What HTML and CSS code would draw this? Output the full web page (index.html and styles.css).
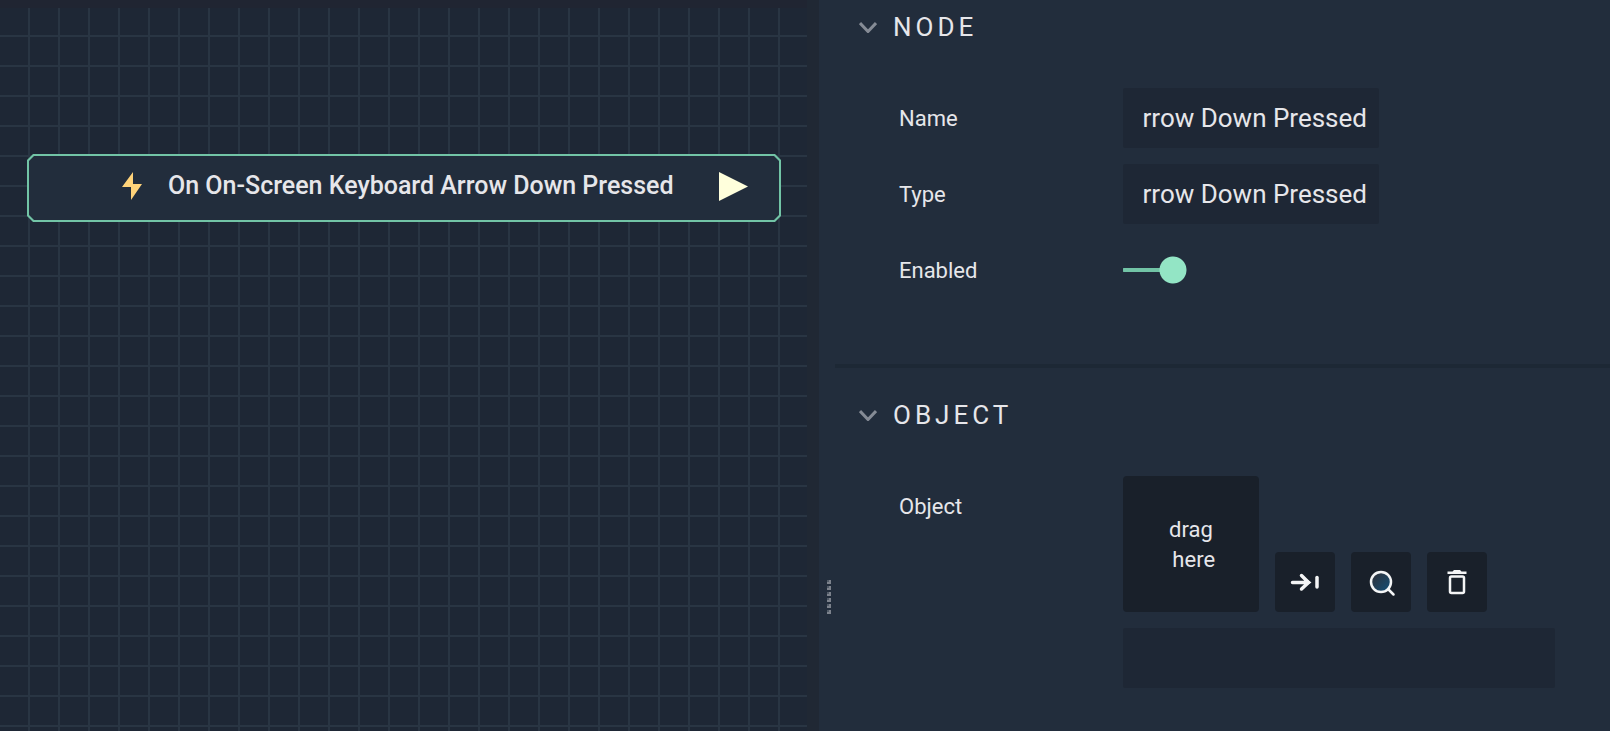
FILE: index.html
```html
<!DOCTYPE html>
<html lang="en">
<head>
<meta charset="utf-8">
<title>Node editor</title>
<link rel="stylesheet" href="styles.css">
</head>
<body>
<div class="editor">
  <main class="canvas">
    <div class="grid">
      <div class="node">
        <svg class="node-bolt" viewBox="0 0 20 28" aria-hidden="true"><path d="M11 0 0 15h9v13L20 12h-9z"/></svg>
        <span class="node-title">On On-Screen Keyboard Arrow Down Pressed</span>
        <svg class="node-port" viewBox="0 0 29 29" aria-hidden="true"><path d="M0 0 29 14.500 0 29z"/></svg>
      </div>
    </div>
  </main>
  <div class="gutter"></div>
  <aside class="panel">
    <div class="grip"><i></i><i></i><i></i><i></i><i></i><i></i></div>
    <section class="section">
      <h2 class="heading">
        <svg class="chevron" viewBox="0 0 18 12" aria-hidden="true"><path d="M1 2 9 10.500 17 2"/></svg>
        NODE
      </h2>
      <div class="fields">
        <label class="label" for="name">Name</label>
        <input class="text" id="name" type="text" dir="rtl" value="On On-Screen Keyboard Arrow Down Pressed">
        <label class="label" for="type">Type</label>
        <input class="text" id="type" type="text" dir="rtl" value="On On-Screen Keyboard Arrow Down Pressed" readonly>
        <label class="label" for="enabled">Enabled</label>
        <div class="cell"><input class="toggle" id="enabled" type="checkbox" checked></div>
      </div>
    </section>
    <section class="section section-object">
      <h2 class="heading">
        <svg class="chevron" viewBox="0 0 18 12" aria-hidden="true"><path d="M1 2 9 10.500 17 2"/></svg>
        OBJECT
      </h2>
      <div class="fields">
        <label class="label" for="object">Object</label>
        <div class="object">
          <div class="tools">
            <div class="drop">drag<br>&nbsp;here</div>
            <button class="tool" type="button" aria-label="Go to object">
              <svg viewBox="0 0 30 30" aria-hidden="true"><path class="stroke thick" d="M2.500 15.500h16M11.500 8.500l7 7-7 6.500"/><path class="fill" d="M14 10.500l7.500 5-7.500 4.500z"/><path class="stroke thick" d="M27 10.500v9.500"/></svg>
            </button>
            <button class="tool" type="button" aria-label="Find object">
              <svg viewBox="0 0 30 30" aria-hidden="true"><defs><linearGradient id="lens" x1="0" y1="0" x2="1" y2="1"><stop offset="0.200" stop-color="#2b3542"/><stop offset="1" stop-color="#12507a"/></linearGradient></defs><circle class="stroke" cx="15" cy="15" r="10" fill="url(#lens)"/><path class="stroke" d="m22 22 5.500 5.500"/></svg>
            </button>
            <button class="tool" type="button" aria-label="Delete">
              <svg viewBox="0 0 30 30" aria-hidden="true"><path class="fill" d="M5.500 4.500h5L12 3h6l1.500 1.500h5V7h-19z"/><rect class="stroke" x="8" y="9.500" width="14" height="16.500" rx="1.500" fill="none"/></svg>
            </button>
          </div>
          <input class="text text-wide" id="object" type="text">
        </div>
      </div>
    </section>
  </aside>
</div>
</body>
</html>
```
FILE: styles.css
```css
* {
  box-sizing: border-box;
}

body {
  margin: 0;
  background: #222d3c;
  color: #e6e6ea;
  font-family: Roboto, "Liberation Sans", sans-serif;
  font-size: 22px;
  line-height: 30px;
}

.editor {
  display: grid;
  grid-template-columns: minmax(0, 807fr) 12px minmax(0, 791fr);
  min-height: 100vh;
}

.canvas {
  display: flex;
  padding-top: 8px;
  background: #202532;
}

.grid {
  position: relative;
  flex: 1;
  overflow: hidden;
  background-color: #1e2735;
  background-image:
    linear-gradient(#293543 2px, transparent 2px),
    linear-gradient(90deg, #293543 2px, transparent 2px);
  background-size: 30px 30px;
  background-position: 28px 27px;
}

.gutter {
  background: #202834;
}

.node {
  position: absolute;
  left: 27px;
  top: 146px;
  width: 754px;
  height: 68px;
  padding: 0 33px 4px 95px;
  display: flex;
  align-items: center;
  background: #72c4a6;
  clip-path: polygon(6px 0, calc(100% - 6px) 0, 100% 6px, 100% calc(100% - 6px), calc(100% - 6px) 100%, 6px 100%, 0 calc(100% - 6px), 0 6px);
}

.node::before {
  content: "";
  position: absolute;
  inset: 2px;
  background: #222d3c;
  clip-path: polygon(5px 0, calc(100% - 5px) 0, 100% 5px, 100% calc(100% - 5px), calc(100% - 5px) 100%, 5px 100%, 0 calc(100% - 5px), 0 5px);
}

.node > * {
  position: relative;
}

.node-bolt {
  width: 20px;
  height: 28px;
  margin-right: 26px;
  fill: #ffd37a;
}

.node-title {
  flex: 1;
  font-size: 25px;
  font-weight: 500;
  white-space: nowrap;
}

.node-port {
  width: 29px;
  height: 29px;
  fill: #ffffdc;
}

.panel {
  position: relative;
  padding-left: 16px;
}

.grip {
  position: absolute;
  left: 8px;
  top: 580px;
  display: grid;
  gap: 2px;
}

.grip i {
  width: 4px;
  height: 4px;
  background: linear-gradient(#505a67, #505a67) 0 0 / 2px 2px no-repeat #7c828c;
}

.section {
  padding-bottom: 64px;
}

.section-object {
  padding: 20px 0 40px;
  border-top: 4px solid #1d2835;
}

.heading {
  display: flex;
  align-items: center;
  gap: 16px;
  height: 54px;
  margin: 0 0 34px;
  padding-left: 24px;
  font-size: 26px;
  font-weight: 400;
  letter-spacing: 4px;
}

.chevron {
  width: 18px;
  height: 12px;
  fill: none;
  stroke: #858b95;
  stroke-width: 3;
}

.fields {
  display: grid;
  grid-template-columns: 224px minmax(0, 1fr);
  row-gap: 16px;
  padding-left: 64px;
}

.label {
  height: 60px;
  line-height: 62px;
}

.cell {
  display: flex;
  align-items: center;
  height: 60px;
}

.text {
  width: 256px;
  height: 60px;
  padding: 0 12px 0 20px;
  border: 0;
  border-radius: 2px;
  outline: 0;
  background: #1e2735;
  color: inherit;
  font: inherit;
  font-size: 26px;
}

.text-wide {
  width: 100%;
}

.toggle {
  appearance: none;
  width: 64px;
  height: 28px;
  margin: 0;
  background:
    radial-gradient(circle at 50px 14px, #93e5c5 13px, transparent 14px),
    linear-gradient(#72c4a6, #72c4a6) 0 12px / 40px 4px no-repeat;
  border-radius: 14px;
}

.object {
  display: grid;
  gap: 16px;
  padding-right: 55px;
}

.tools {
  display: flex;
  align-items: flex-end;
  gap: 16px;
}

.drop {
  display: grid;
  place-content: center;
  width: 136px;
  height: 136px;
  padding-top: 2px;
  border-radius: 4px;
  background: #19202a;
  text-align: center;
}

.tool {
  display: grid;
  place-content: center;
  width: 60px;
  height: 60px;
  padding: 0;
  border: 0;
  border-radius: 4px;
  background: #19202a;
}

.tool svg {
  width: 30px;
  height: 30px;
}

.stroke {
  stroke: #f4f5f6;
  stroke-width: 2.500;
  stroke-linecap: round;
}

.thick {
  fill: none;
  stroke-width: 3.500;
}

.fill {
  fill: #f4f5f6;
}
```
